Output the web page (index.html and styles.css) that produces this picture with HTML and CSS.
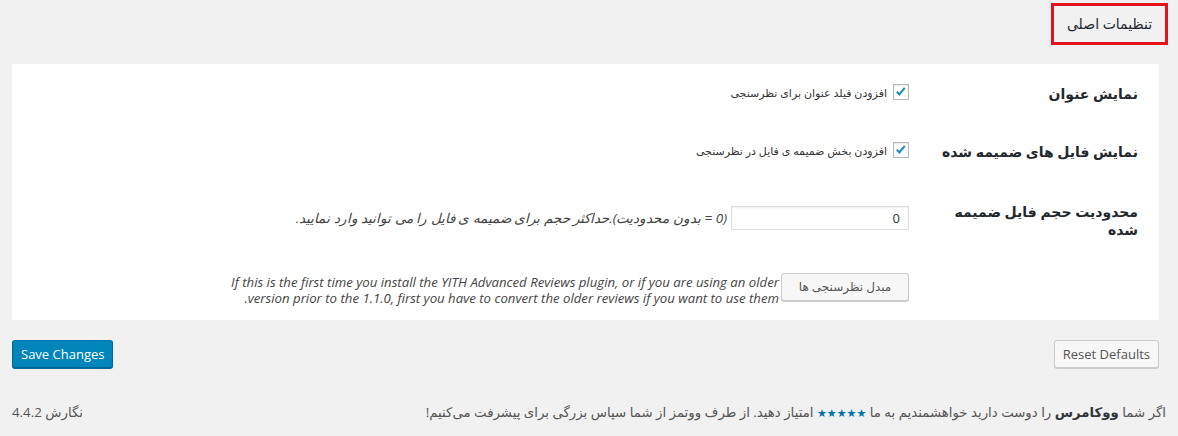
FILE: index.html
```html
<!DOCTYPE html>
<html lang="fa" dir="rtl">
<head>
  <meta charset="UTF-8">
  <title>تنظیمات اصلی</title>
  <link rel="stylesheet" href="styles.css">
</head>
<body>
<div class="tabs">
  <a class="tab">تنظیمات اصلی</a>
</div>

<div class="panel">
  <div class="row row-1">
    <div class="th">نمایش عنوان</div>
    <div class="td">
      <label class="check">
        <span class="box"><svg viewBox="0 0 16 16" width="16" height="16"><path d="M3.2 7.6l2.9 3.1 6.2-7.4" fill="none" stroke="#1e8cbe" stroke-width="2.4"/></svg></span>
        <span class="hint">افزودن فیلد عنوان برای نظرسنجی</span>
      </label>
    </div>
  </div>

  <div class="row row-2">
    <div class="th">نمایش فایل های ضمیمه شده</div>
    <div class="td">
      <label class="check">
        <span class="box"><svg viewBox="0 0 16 16" width="16" height="16"><path d="M3.2 7.6l2.9 3.1 6.2-7.4" fill="none" stroke="#1e8cbe" stroke-width="2.4"/></svg></span>
        <span class="hint">افزودن بخش ضمیمه ی فایل در نظرسنجی</span>
      </label>
    </div>
  </div>

  <div class="row row-3">
    <div class="th">محدودیت حجم فایل ضمیمه<br>شده</div>
    <div class="td">
      <input class="num" type="text" value="0">
      <span class="desc">(0 = بدون محدودیت).حداکثر حجم برای ضمیمه ی فایل را می توانید وارد نمایید.</span>
    </div>
  </div>

  <div class="row row-4">
    <div class="th"></div>
    <div class="td">
      <button class="btn">مبدل نظرسنجی ها</button>
      <span class="note">If this is the first time you install the YITH Advanced Reviews plugin, or if you are using an older<br>version prior to the 1.1.0, first you have to convert the older reviews if you want to use them.</span>
    </div>
  </div>
</div>

<div class="actions">
  <button class="btn">Reset Defaults</button>
  <button class="btn primary">Save Changes</button>
</div>

<div class="footer">
  <span>اگر شما <b>ووکامرس</b> را دوست دارید خواهشمندیم به ما <span class="stars">★★★★★</span> امتیاز دهید. از طرف ووتمز از شما سپاس بزرگی برای پیشرفت می‌کنیم!</span>
  <span>نگارش 4.4.2</span>
</div>
</body>
</html>
```

FILE: styles.css
```css
body {
  margin: 0;
  background: #f1f1f1;
  color: #444;
  font-family: "Open Sans", "DejaVu Sans", sans-serif;
  font-size: 13px;
}

.tabs {
  display: flex;
  padding: 3px 10px 0 0;
}

.tab {
  box-sizing: border-box;
  width: 117px;
  height: 42px;
  border: 3px solid #e3131c;
  display: flex;
  align-items: center;
  justify-content: center;
  font-size: 14px;
  color: #23282d;
  padding-bottom: 2px;
}

.panel {
  background: #fff;
  margin: 19px 19px 0 12px;
  height: 256px;
}

.row {
  display: flex;
  align-items: flex-start;
}

.th {
  box-sizing: border-box;
  width: 250px;
  flex: none;
  padding-right: 21px;
  font-weight: bold;
  font-size: 14px;
  line-height: 18px;
  color: #23282d;
}

.td {
  display: flex;
  align-items: center;
  gap: 4px;
}

.row-1 { height: 58px; }
.row-1 .th { padding-top: 21px; }
.row-1 .td { padding-top: 20px; }

.row-2 { height: 62px; }
.row-2 .th { padding-top: 21px; }
.row-2 .td { padding-top: 20px; }

.row-3 { height: 76px; }
.row-3 .th { padding-top: 19px; }
.row-3 .td { padding-top: 22px; }

.row-4 { height: 60px; }
.row-4 .td { padding-top: 13px; align-items: flex-start; gap: 2px; }

.check {
  display: flex;
  align-items: center;
  gap: 6px;
}

.box {
  box-sizing: border-box;
  width: 16px;
  height: 16px;
  border: 1px solid #b4b9be;
  box-shadow: inset 0 1px 2px rgba(0, 0, 0, 0.1);
  display: flex;
  align-items: center;
  justify-content: center;
}

.box svg {
  width: 14px;
  height: 14px;
}

.hint {
  font-size: 11px;
  color: #333;
}

.num {
  box-sizing: border-box;
  width: 178px;
  height: 24px;
  margin: 0;
  border: 1px solid #ddd;
  box-shadow: inset 0 1px 2px rgba(0, 0, 0, 0.07);
  padding: 0 8px;
  font-family: "Open Sans", sans-serif;
  font-size: 13px;
  color: #32373c;
  text-align: right;
}

.desc {
  font-size: 13.5px;
  font-style: italic;
  color: #444;
}

.note {
  font-size: 13.2px;
  line-height: 16px;
  font-style: italic;
  color: #444;
  padding-top: 1px;
  white-space: nowrap;
}

.btn {
  box-sizing: border-box;
  height: 28px;
  padding: 0 10px 1px;
  border: 1px solid #ccc;
  border-radius: 3px;
  background: #f7f7f7;
  box-shadow: 0 1px 0 #ccc;
  color: #555;
  font-family: "Open Sans", "DejaVu Sans", sans-serif;
  font-size: 13px;
  margin: 0;
  white-space: nowrap;
}

.row-4 .btn {
  width: 128px;
  font-size: 12px;
}

.actions {
  display: flex;
  justify-content: space-between;
  margin: 20px 19px 0 12px;
}

.actions .btn {
  padding: 0 8px 1px;
}

.actions .primary {
  background: #0085ba;
  border-color: #0073aa #006799 #006799;
  box-shadow: 0 1px 0 #006799;
  color: #fff;
}

.footer {
  display: flex;
  justify-content: space-between;
  margin-top: 34px;
  padding: 0 12px;
  line-height: 20px;
  color: #555;
  font-size: 13.3px;
}

.footer b {
  color: #32373c;
}

.stars {
  color: #0073aa;
  font-size: 11px;
}
```
